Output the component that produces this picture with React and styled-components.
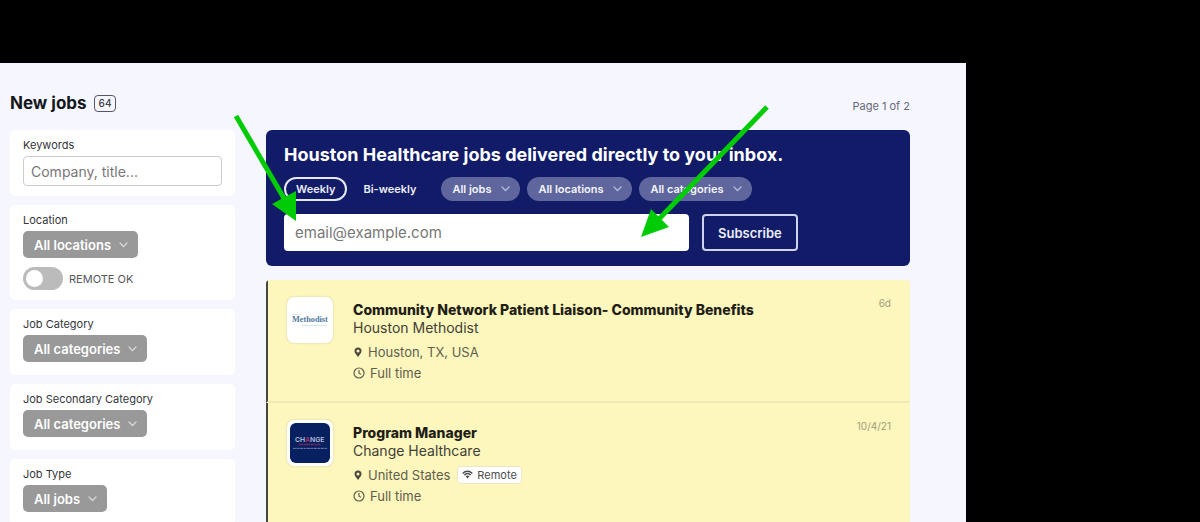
import { useState } from "react";
import styled, { createGlobalStyle } from "styled-components";

const GlobalStyle = createGlobalStyle`
    * {
        box-sizing: border-box;
    }

    body {
        margin: 0;
        background-color: #000;
        color: #1b1d22;
        font-family: Inter, "Liberation Sans", sans-serif;
        font-size: 12px;
    }

    button, input, select {
        font-family: inherit;
    }
`;

const Frame = styled.div`
    padding: 63px 234px 0 0;
`;

const Page = styled.div`
    position: relative;
    min-height: calc(100vh - 63px);
    padding: 30px 56px 0 10px;
    background-color: #f5f6ff;
`;

const Header = styled.header`
    display: flex;
    align-items: center;
    gap: 7px;
    height: 20px;
    margin-bottom: 17px;
`;

const Title = styled.h1`
    margin: 0;
    font-size: 17px;
    line-height: 20px;
    font-weight: 700;
    color: #14161b;
`;

const Count = styled.span`
    padding-inline: 4px;
    border: 1px solid #555862;
    border-radius: 4px;
    font-size: 10px;
    line-height: 15px;
    font-weight: 500;
    color: #3c3f47;
`;

const PageInfo = styled.span`
    margin-left: auto;
    padding-top: 6px;
    font-size: 11px;
    color: #666973;
`;

const Columns = styled.div`
    display: grid;
    grid-template-columns: 225px 1fr;
    gap: 31px;
    align-items: start;
`;

const Sidebar = styled.aside`
    display: grid;
    gap: 9px;
`;

const FilterCard = styled.div`
    display: flex;
    flex-direction: column;
    align-items: flex-start;
    min-height: 66px;
    padding: 8px 13px 10px;
    border-radius: 5px;
    background-color: #fff;
`;

const FilterLabel = styled.label`
    margin-bottom: 4px;
    font-size: 11px;
    line-height: 14px;
    color: #34363b;
`;

const KeywordInput = styled.input`
    width: 100%;
    height: 30px;
    padding: 0 7px;
    border: 1px solid #ccc;
    border-radius: 4px;
    outline: none;
    font-size: 14px;

    &::placeholder {
        color: #777;
    }
`;

const SelectWrapper = styled.span`
    display: inline-grid;
    align-items: center;

    & > select,
    & > svg {
        grid-area: 1 / 1;
    }
    & > svg {
        justify-self: end;
        margin-right: 10px;
        pointer-events: none;
    }
`;

const SelectBox = styled.select`
    appearance: none;
    height: ${props => props.$pill ? "24px" : "27px"};
    padding: 0 ${props => props.$pill ? "28px" : "26px"} 0 11px;
    border: none;
    border-radius: ${props => props.$pill ? "12px" : "5px"};
    outline: none;
    background-color: ${props => props.$pill ? "#5f669d" : "#999"};
    color: ${props => props.$pill ? "#f4f5fb" : "#fff"};
    font-size: ${props => props.$pill ? "11px" : "13px"};
    font-weight: 600;
    cursor: pointer;
`;

const ToggleLabel = styled.label`
    display: flex;
    align-items: center;
    gap: 6px;
    margin-top: 9px;
    font-size: 11px;
    color: #55575c;
`;

const Toggle = styled.input`
    appearance: none;
    width: 40px;
    height: 23px;
    margin: 0;
    padding: 3px;
    border-radius: 12px;
    background-color: ${props => props.checked ? "#111b68" : "#bbb"};
    cursor: pointer;

    &::before {
        content: "";
        display: block;
        width: 17px;
        height: 17px;
        margin-left: ${props => props.checked ? "17px" : "0"};
        border-radius: 50%;
        background-color: #fff;
    }
`;

const Main = styled.main`
    display: grid;
    gap: 14px;
`;

const Banner = styled.form`
    padding: 14px 18px 15px;
    border-radius: 6px;
    background-color: #111b68;
`;

const BannerTitle = styled.h2`
    margin: 0 0 11px;
    font-size: 18px;
    line-height: 22px;
    font-weight: 700;
    color: #fff;
`;

const PillRow = styled.div`
    display: flex;
    align-items: center;
    gap: 7px;
    margin-bottom: 13px;
`;

const Frequency = styled.div`
    display: flex;
    gap: 4px;
    margin-right: 6px;
`;

const FrequencyButton = styled.button`
    height: 24px;
    padding: 0 10px;
    border: 2px solid ${props => props.$active ? "#e6e8f5" : "transparent"};
    border-radius: 12px;
    background: none;
    color: #eceef8;
    font-size: 11px;
    font-weight: 600;
    cursor: pointer;
`;

const SubscribeRow = styled.div`
    display: flex;
    gap: 13px;
`;

const EmailInput = styled.input`
    flex: 0 1 405px;
    min-width: 0;
    height: 37px;
    padding: 0 11px;
    border: none;
    border-radius: 4px;
    outline: none;
    font-size: 15px;

    &::placeholder {
        color: #777;
    }
`;

const SubscribeButton = styled.button`
    height: 37px;
    padding: 0 14px;
    border: 2px solid #cfd2e8;
    border-radius: 4px;
    background: none;
    color: #eceef8;
    font-size: 13px;
    font-weight: 600;
    cursor: pointer;
`;

const JobList = styled.ul`
    margin: 0;
    padding: 0;
    list-style: none;
    border-radius: 4px;
    overflow: hidden;
`;

const JobRow = styled.li`
    display: flex;
    align-items: flex-start;
    padding: 17px 19px 18px;
    border-left: 2px solid #45453f;
    border-bottom: 2px solid #f0e9b5;
    background-color: #fdf6bd;
`;

const Logo = styled.div`
    display: flex;
    flex: none;
    width: 46px;
    height: 46px;
    padding: 3px;
    border-radius: 7px;
    background-color: #fff;
    box-shadow: 0 0 2px #c9c49a;
`;

const JobInfo = styled.div`
    flex: 1;
    padding: 4px 0 0 20px;
`;

const JobTitle = styled.h3`
    margin: 0;
    font-size: 14px;
    line-height: 18px;
    font-weight: 800;
    color: #1f1e17;
`;

const Company = styled.div`
    margin-bottom: 4px;
    font-size: 14px;
    line-height: 18px;
    color: #414036;
`;

const Meta = styled.div`
    display: flex;
    align-items: center;
    gap: 5px;
    height: 21px;
    font-size: 13px;
    color: #605e4e;
`;

const RemoteBadge = styled.span`
    display: flex;
    align-items: center;
    gap: 4px;
    height: 18px;
    margin-left: 2px;
    padding: 0 4px;
    border: 1px solid #ebe6c4;
    border-radius: 4px;
    background-color: #fff;
    font-size: 11px;
    color: #4c4c4c;
`;

const JobDate = styled.time`
    font-size: 10px;
    line-height: 12px;
    color: #a19d7c;
`;

const Annotations = styled.svg`
    position: absolute;
    top: 0;
    left: 0;
    pointer-events: none;
`;

function Chevron({ color }) {
    return (
        <svg width="9" height="6" viewBox="0 0 9 6" fill="none" stroke={color} strokeWidth="1.3" strokeLinecap="round">
            <path d="M1 1l3.5 3.5L8 1" />
        </svg>
    );
}

function Dropdown({ id, text, pill, label }) {
    return (
        <SelectWrapper>
            <SelectBox id={id} aria-label={label} $pill={pill}>
                <option>{text}</option>
            </SelectBox>
            <Chevron color={pill ? "#b7bbdb" : "#d6d6d6"} />
        </SelectWrapper>
    );
}

function PinIcon() {
    return (
        <svg width="10" height="10" viewBox="0 0 10 10">
            <path fill="#4b493c" fillRule="evenodd" d="M5 .5a3.500 3.500 0 0 0-3.500 3.500C1.500 6.500 4 7.500 4.400 9.500h1.200C6 7.500 8.500 6.500 8.500 4A3.500 3.500 0 0 0 5 .5zm0 2a1.500 1.500 0 1 1 0 3 1.500 1.500 0 0 1 0-3z" />
        </svg>
    );
}

function ClockIcon() {
    return (
        <svg width="12" height="12" viewBox="0 0 12 12" fill="none" stroke="#605e4e" strokeWidth="1.2">
            <circle cx="6" cy="6" r="5" />
            <path d="M6 3v3.200l2 1" />
        </svg>
    );
}

function WifiIcon() {
    return (
        <svg width="11" height="9" viewBox="0 0 11 9" fill="none" stroke="#4c4c4c" strokeWidth="1.5">
            <path d="M.7 3.400c2.700-2.900 6.900-2.900 9.600 0M2.400 5.100c1.800-1.800 4.400-1.800 6.200 0" />
            <path fill="#4c4c4c" stroke="none" d="M3.600 6.200c1.200-1 2.600-1 3.800 0L5.500 8.500z" />
        </svg>
    );
}

function MethodistLogo() {
    return (
        <svg width="40" height="40" viewBox="0 0 41 41">
            <text x="2" y="23" fontFamily="Liberation Serif, serif" fontSize="8.500" fontWeight="700" fill="#52799b">Methodist</text>
            <path d="M2 15h9M12 26h26" stroke="#d5e2ea" strokeWidth="1" />
        </svg>
    );
}

function ChangeLogo() {
    return (
        <svg width="40" height="40" viewBox="0 0 41 41">
            <rect width="41" height="41" rx="6" fill="#07205f" />
            <text x="5" y="19" fontFamily="Inter, sans-serif" fontSize="7" fontWeight="600" fill="#b9c2dc">
                CH<tspan fill="#a8326c">A</tspan>NGE
            </text>
            <path d="M9 22h23" stroke="#81285f" strokeWidth="1.500" strokeDasharray="2 .5" />
            <path d="M3 26h35" stroke="#7482aa" strokeWidth="1" strokeDasharray="3 .6" />
        </svg>
    );
}

const filters = [
    { id: "category", label: "Job Category", text: "All categories" },
    { id: "secondary", label: "Job Secondary Category", text: "All categories" },
    { id: "type", label: "Job Type", text: "All jobs" },
];

const jobs = [
    {
        title: "Community Network Patient Liaison- Community Benefits",
        company: "Houston Methodist",
        place: "Houston, TX, USA",
        type: "Full time",
        date: "6d",
        logo: <MethodistLogo />,
    },
    {
        title: "Program Manager",
        company: "Change Healthcare",
        place: "United States",
        type: "Full time",
        date: "10/4/21",
        remote: true,
        logo: <ChangeLogo />,
    },
];

export default function App() {
    const [remoteOk, setRemoteOk] = useState(false);
    const [frequency, setFrequency] = useState("Weekly");

    return (
        <Frame>
            <GlobalStyle />
            <Page>
                <Header>
                    <Title>New jobs</Title>
                    <Count>64</Count>
                    <PageInfo>Page 1 of 2</PageInfo>
                </Header>

                <Columns>
                    <Sidebar>
                        <FilterCard>
                            <FilterLabel htmlFor="keywords">Keywords</FilterLabel>
                            <KeywordInput id="keywords" type="text" placeholder="Company, title..." />
                        </FilterCard>

                        <FilterCard>
                            <FilterLabel htmlFor="location">Location</FilterLabel>
                            <Dropdown id="location" text="All locations" />
                            <ToggleLabel>
                                <Toggle
                                    type="checkbox"
                                    checked={remoteOk}
                                    onChange={(ev) => setRemoteOk(ev.target.checked)}
                                />
                                REMOTE OK
                            </ToggleLabel>
                        </FilterCard>

                        {filters.map(filter => (
                            <FilterCard key={filter.id}>
                                <FilterLabel htmlFor={filter.id}>{filter.label}</FilterLabel>
                                <Dropdown id={filter.id} text={filter.text} />
                            </FilterCard>
                        ))}
                    </Sidebar>

                    <Main>
                        <Banner onSubmit={(ev) => ev.preventDefault()}>
                            <BannerTitle>Houston Healthcare jobs delivered directly to your inbox.</BannerTitle>
                            <PillRow>
                                <Frequency>
                                    {["Weekly", "Bi-weekly"].map(name => (
                                        <FrequencyButton
                                            key={name}
                                            type="button"
                                            $active={frequency === name}
                                            aria-pressed={frequency === name}
                                            onClick={() => setFrequency(name)}
                                        >
                                            {name}
                                        </FrequencyButton>
                                    ))}
                                </Frequency>
                                <Dropdown pill label="Job type" text="All jobs" />
                                <Dropdown pill label="Location" text="All locations" />
                                <Dropdown pill label="Category" text="All categories" />
                            </PillRow>
                            <SubscribeRow>
                                <EmailInput type="email" aria-label="Email" placeholder="email@example.com" />
                                <SubscribeButton type="submit">Subscribe</SubscribeButton>
                            </SubscribeRow>
                        </Banner>

                        <JobList>
                            {jobs.map(job => (
                                <JobRow key={job.title}>
                                    <Logo>{job.logo}</Logo>
                                    <JobInfo>
                                        <JobTitle>{job.title}</JobTitle>
                                        <Company>{job.company}</Company>
                                        <Meta>
                                            <PinIcon />
                                            <span>{job.place}</span>
                                            {job.remote && <RemoteBadge><WifiIcon />Remote</RemoteBadge>}
                                        </Meta>
                                        <Meta>
                                            <ClockIcon />
                                            <span>{job.type}</span>
                                        </Meta>
                                    </JobInfo>
                                    <JobDate>{job.date}</JobDate>
                                </JobRow>
                            ))}
                        </JobList>
                    </Main>
                </Columns>

                <Annotations width="800" height="200" fill="#00cc05" stroke="#00cc05" aria-hidden="true">
                    <path d="M236 53L285 137M767 44L659 156" strokeWidth="5" />
                    <path d="M296 158L272 141L296 128zM641 174L651 146L669 164z" stroke="none" />
                </Annotations>
            </Page>
        </Frame>
    );
}
